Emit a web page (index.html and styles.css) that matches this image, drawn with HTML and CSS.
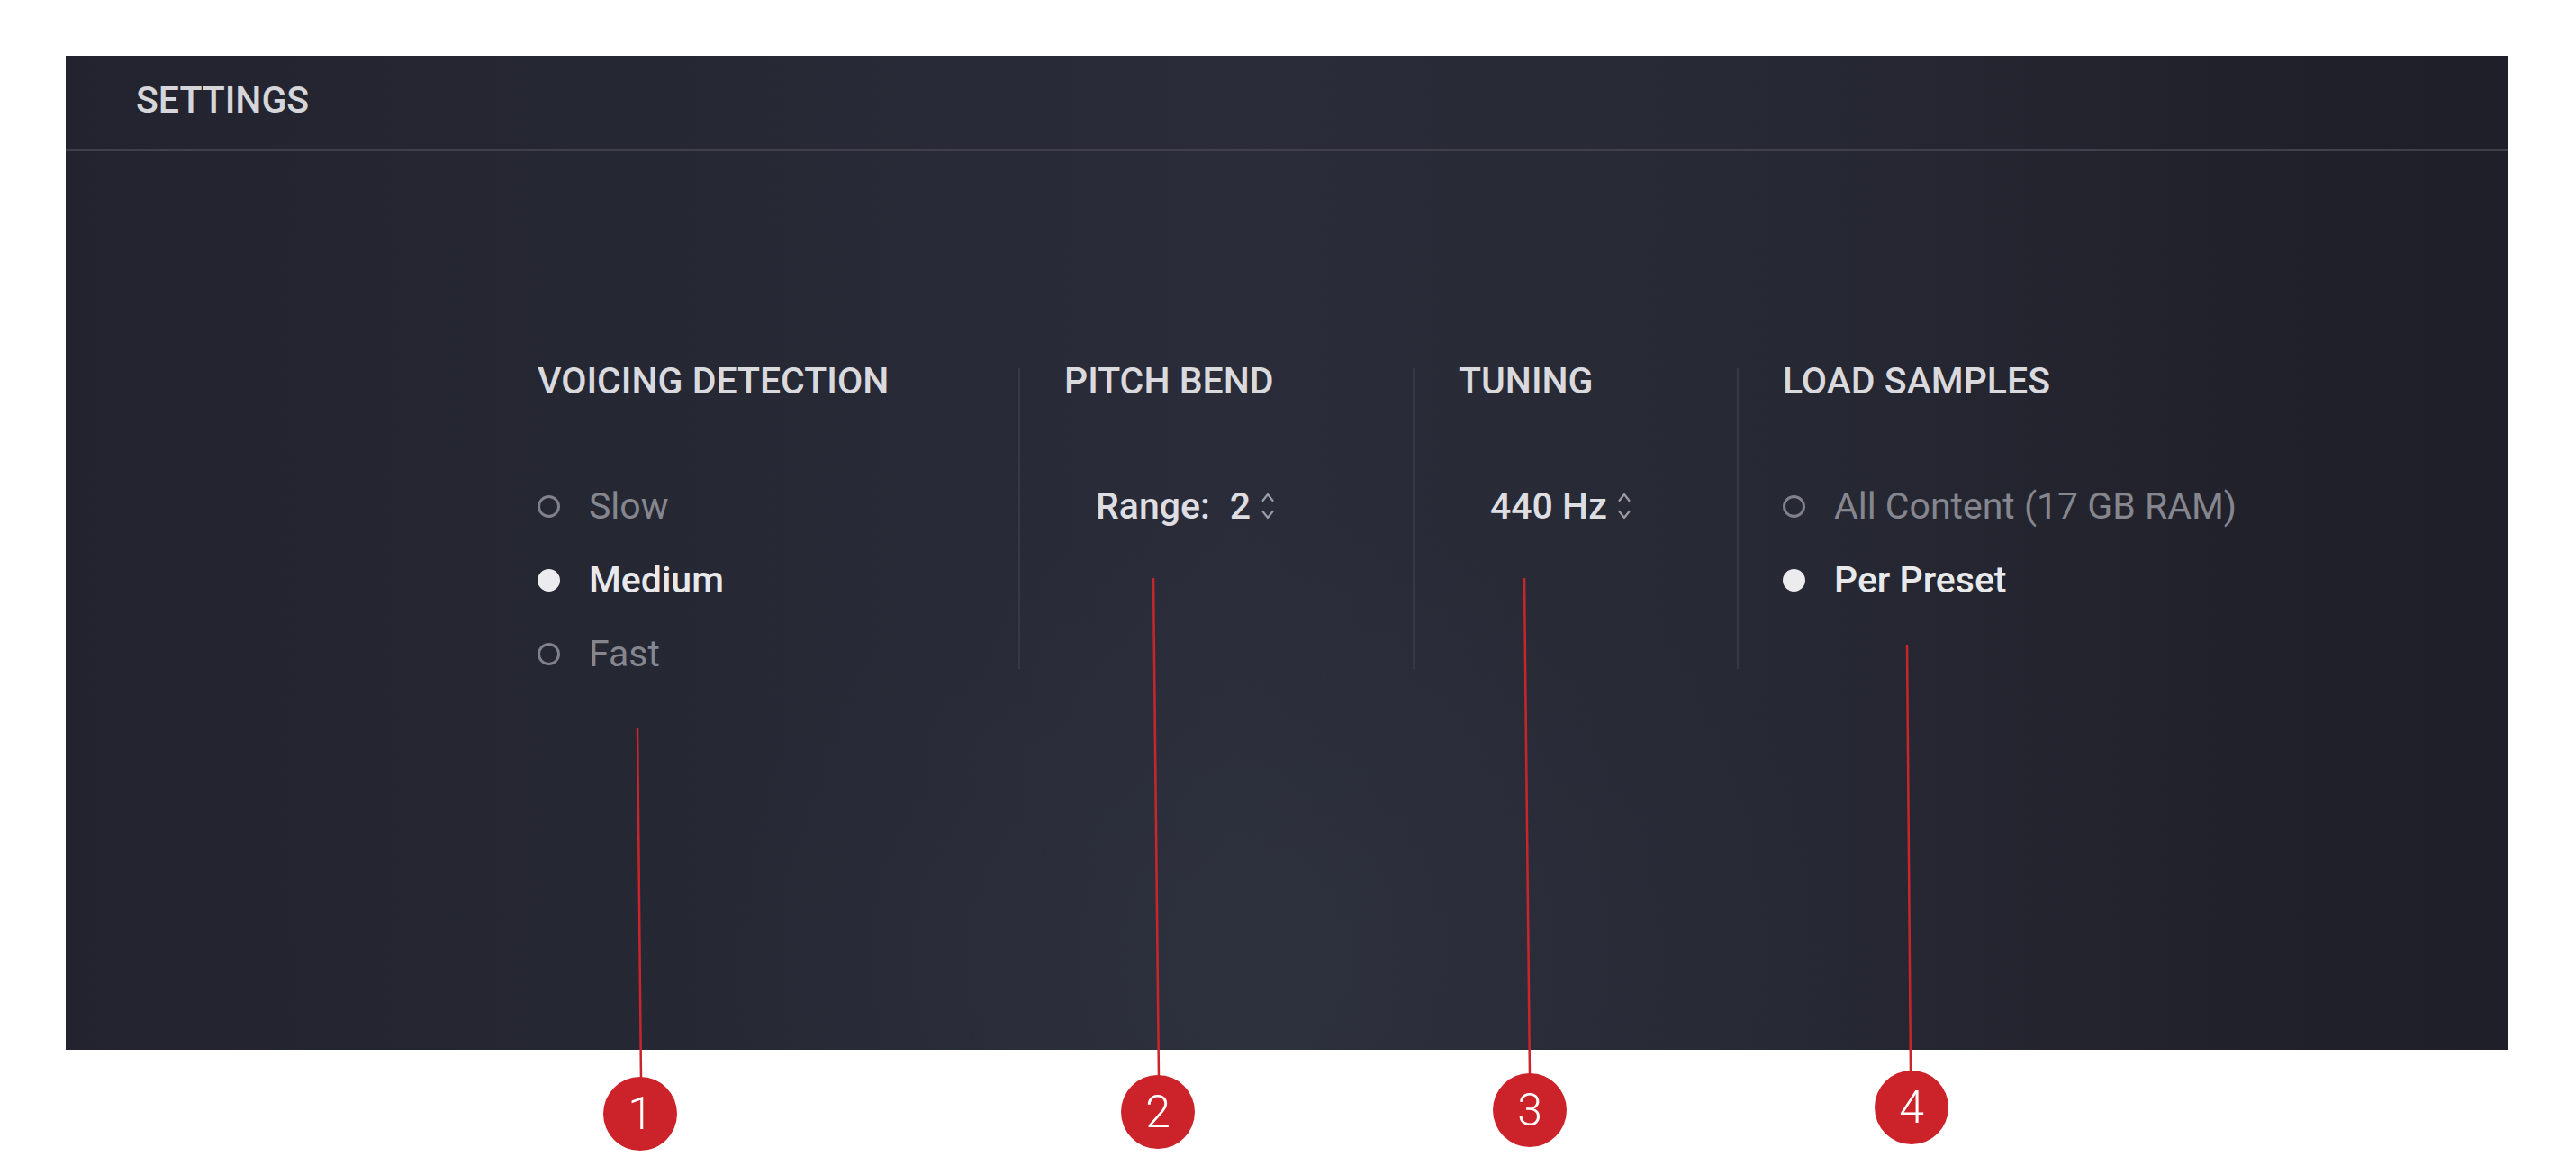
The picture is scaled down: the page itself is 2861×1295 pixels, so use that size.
FILE: index.html
```html
<!DOCTYPE html>
<html>
<head>
<meta charset="utf-8">
<title>Settings</title>
<link rel="stylesheet" href="styles.css">
</head>
<body>
<div class="page">
  <section class="panel">
    <header class="panel-head"><span class="panel-title">SETTINGS</span></header>
    <div class="cols">
      <div class="col col-voicing">
        <div class="col-title">VOICING DETECTION</div>
        <div class="opt"><span class="radio"></span><span class="opt-label">Slow</span></div>
        <div class="opt on"><span class="radio"></span><span class="opt-label">Medium</span></div>
        <div class="opt"><span class="radio"></span><span class="opt-label">Fast</span></div>
      </div>
      <div class="col col-pitch sep">
        <div class="col-title">PITCH BEND</div>
        <div class="opt value"><span class="val-label">Range:</span><span class="val-num">2</span>
          <svg class="spin" width="18" height="38" viewBox="0 0 18 38"><path d="M3.5 13 L9 6 L14.5 13 M3.5 25 L9 32 L14.5 25" fill="none" stroke="#9a9ba3" stroke-width="2.2" stroke-linecap="round" stroke-linejoin="round"/></svg>
        </div>
      </div>
      <div class="col col-tuning sep">
        <div class="col-title">TUNING</div>
        <div class="opt value"><span class="val-num">440 Hz</span>
          <svg class="spin" width="18" height="38" viewBox="0 0 18 38"><path d="M3.5 13 L9 6 L14.5 13 M3.5 25 L9 32 L14.5 25" fill="none" stroke="#9a9ba3" stroke-width="2.2" stroke-linecap="round" stroke-linejoin="round"/></svg>
        </div>
      </div>
      <div class="col col-load sep">
        <div class="col-title">LOAD SAMPLES</div>
        <div class="opt"><span class="radio"></span><span class="opt-label">All Content (17 GB RAM)</span></div>
        <div class="opt on"><span class="radio"></span><span class="opt-label">Per Preset</span></div>
      </div>
    </div>
  </section>

  <svg class="callout-lines" width="2861" height="1295" viewBox="0 0 2861 1295">
    <g stroke="#c9262c" stroke-width="2.5" fill="none">
      <line x1="708" y1="808" x2="712" y2="1200"/>
      <line x1="1281" y1="642" x2="1287" y2="1198"/>
      <line x1="1693" y1="642" x2="1699" y2="1196"/>
      <line x1="2118" y1="716" x2="2122" y2="1193"/>
    </g>
  </svg>
  <div class="badge b1">1</div>
  <div class="badge b2">2</div>
  <div class="badge b3">3</div>
  <div class="badge b4">4</div>
</div>
</body>
</html>
```

FILE: styles.css
```css
html, body {
  margin: 0;
  padding: 0;
  background: #ffffff;
}

body {
  font-family: Roboto, "Noto Sans", "Liberation Sans", sans-serif;
  width: 2861px;
  height: 1295px;
  overflow: hidden;
}

.page {
  position: relative;
  width: 2861px;
  height: 1295px;
  padding: 62px 0 0 73px;
  box-sizing: border-box;
}

.panel {
  width: 2713px;
  height: 1104px;
  background:
    radial-gradient(ellipse 900px 700px at 1350px 1000px, rgba(52, 56, 70, 0.35), rgba(52, 56, 70, 0) 70%),
    linear-gradient(90deg, #22232e 0%, #252733 22%, #2a2d39 48%, #262833 72%, #20202a 92%, #1f1f29 100%);
  box-sizing: border-box;
}

.panel-head {
  height: 106px;
  box-sizing: border-box;
  border-bottom: 3px solid #3f404c;
  padding-left: 78px;
}

.panel-title {
  display: block;
  font-size: 41px;
  font-weight: 500;
  line-height: 99px;
  color: #d6d6da;
}

.cols {
  display: grid;
  grid-template-columns: 534px 438px 360px 1fr;
  margin: 241px 0 0 524px;
}

.col {
  height: 334px;
  box-sizing: border-box;
}

.sep {
  border-left: 2px solid #363845;
  padding-left: 49px;
}

.col-title {
  font-size: 41px;
  font-weight: 500;
  line-height: 28px;
  color: #dadade;
  white-space: nowrap;
  margin-bottom: 84px;
}

.opt {
  display: flex;
  align-items: center;
  height: 82px;
  font-size: 41px;
  color: #85868e;
  white-space: nowrap;
}

.opt.on {
  color: #e9e9ec;
  font-weight: 500;
}

.radio {
  width: 25px;
  height: 25px;
  box-sizing: border-box;
  border: 3px solid #80818a;
  border-radius: 50%;
  margin-right: 32px;
  flex: none;
}

.opt.on .radio {
  background: #ececee;
  border-color: #ececee;
}

.value {
  padding-left: 35px;
  color: #dedee2;
  font-weight: 500;
}

.val-label {
  margin-right: 22px;
}

.spin {
  margin-left: 10px;
  flex: none;
}

.callout-lines {
  position: absolute;
  left: 0;
  top: 0;
  pointer-events: none;
}

.badge {
  position: absolute;
  width: 82px;
  height: 82px;
  border-radius: 50%;
  background: #cc2229;
  color: #ffffff;
  font-family: Roboto, "Liberation Sans", sans-serif;
  font-weight: 300;
  font-size: 50px;
  line-height: 82px;
  text-align: center;
}

.b1 { left: 670px; top: 1196px; }
.b2 { left: 1245px; top: 1194px; }
.b3 { left: 1658px; top: 1192px; }
.b4 { left: 2082px; top: 1189px; }
```
